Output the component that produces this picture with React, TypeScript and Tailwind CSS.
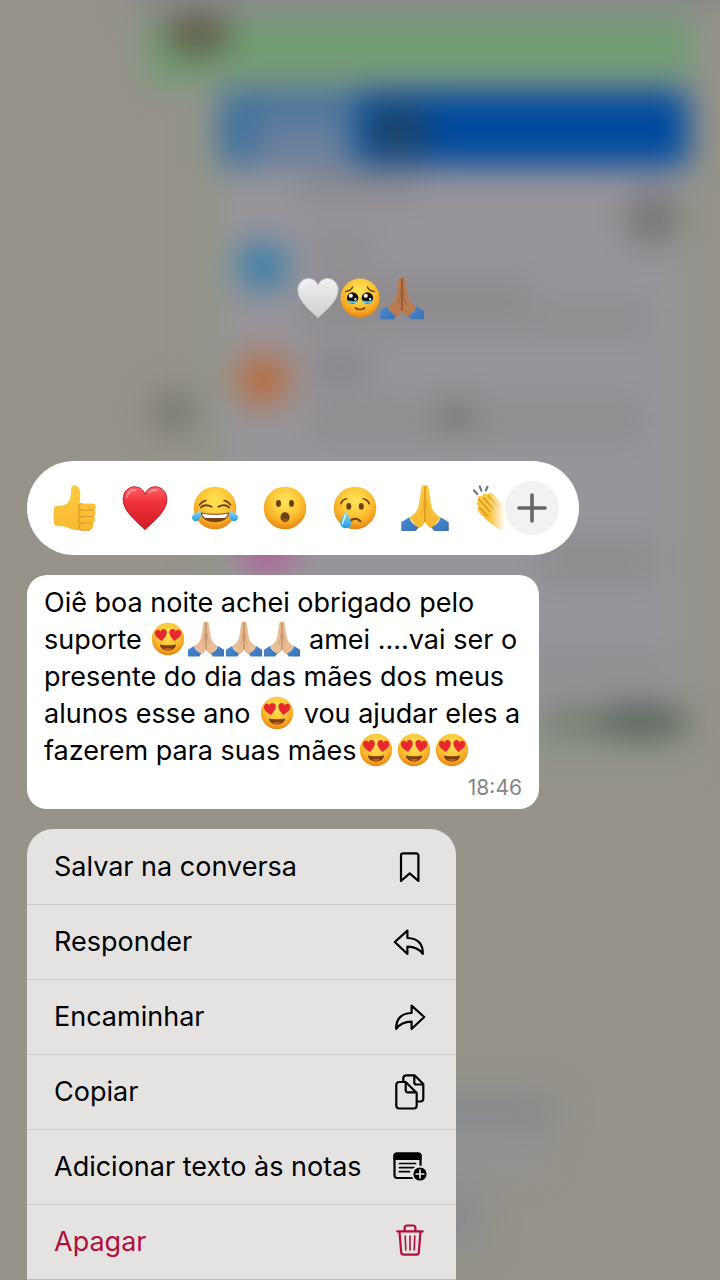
import React from 'react';

interface GlyphProps {
  className?: string;
}

const HEART_PATH =
  'M20 37.3C16 33 2.5 23.4 2.5 13.2C2.5 7 6.8 3 11.6 3C15.5 3 18.6 5.2 20 9C21.4 5.2 24.5 3 28.4 3C33.2 3 37.5 7 37.5 13.2C37.5 23.4 24 33 20 37.3Z';

// Gradients shared by every emoji
const EmojiDefs = () => (
  <svg className="absolute h-0 w-0" aria-hidden="true">
    <defs>
      <radialGradient id="face" cx="0.5" cy="0.34" r="0.68">
        <stop offset="0" stopColor="#ffe45a" />
        <stop offset="0.45" stopColor="#fdcb3a" />
        <stop offset="0.75" stopColor="#f8a925" />
        <stop offset="1" stopColor="#e07f10" />
      </radialGradient>
      <linearGradient id="red-heart" x1="0" y1="0" x2="0" y2="1">
        <stop offset="0" stopColor="#ff6468" />
        <stop offset="0.35" stopColor="#f0343c" />
        <stop offset="1" stopColor="#cf1a25" />
      </linearGradient>
      <linearGradient id="white-heart" x1="0" y1="0" x2="0" y2="1">
        <stop offset="0" stopColor="#efefef" />
        <stop offset="0.5" stopColor="#e0e0e1" />
        <stop offset="1" stopColor="#cfcfd1" />
      </linearGradient>
      <linearGradient id="tear" x1="0" y1="0" x2="0" y2="1">
        <stop offset="0" stopColor="#9fe0fa" />
        <stop offset="1" stopColor="#1e9ee0" />
      </linearGradient>
      <linearGradient id="hand" x1="0" y1="0" x2="0" y2="1">
        <stop offset="0" stopColor="#fdcb3f" />
        <stop offset="1" stopColor="#f8b932" />
      </linearGradient>
      <linearGradient id="sleeve" x1="0" y1="0" x2="1" y2="1">
        <stop offset="0" stopColor="#4a8bd0" />
        <stop offset="1" stopColor="#3a70b4" />
      </linearGradient>
    </defs>
  </svg>
);

const Emoji: React.FC<{ label: string; className?: string; children: React.ReactNode }> = ({
  label,
  className,
  children,
}) => (
  <svg viewBox="0 0 40 40" role="img" aria-label={label} className={className} fill="none">
    {children}
  </svg>
);

const FaceBase = () => <circle cx="20" cy="20" r="17" fill="url(#face)" />;

const HeartEyes: React.FC<GlyphProps> = ({ className }) => (
  <Emoji label="😍" className={className}>
    <FaceBase />
    <g fill="#e8282f">
      <path transform="translate(5.6 8.8) rotate(-8 7 7) scale(.36)" d={HEART_PATH} />
      <path transform="translate(20.2 8.8) rotate(8 7 7) scale(.36)" d={HEART_PATH} />
    </g>
    <path d="M11.5 25.4C14 27 26 27 28.5 25.4C28.6 29.2 25 32 20 32S11.4 29.2 11.5 25.4Z" fill="#7c3f12" />
    <path d="M15.5 30.5C17.5 29 22.5 29 24.5 30.5C22 32 18 32 15.5 30.5Z" fill="#c9601f" />
  </Emoji>
);

const Joy: React.FC<GlyphProps> = ({ className }) => (
  <Emoji label="😂" className={className}>
    <FaceBase />
    <g stroke="#6b3d0e" strokeLinecap="round">
      <path d="M8.8 19.6C10.5 17.4 14 17 17.2 19" strokeWidth="1.6" />
      <path d="M22.8 19C26 17 29.5 17.4 31.2 19.6" strokeWidth="1.6" />
      <path d="M7.6 17.6C9 15.4 10.6 14.4 12.8 14M32.4 17.6C31 15.4 29.4 14.4 27.2 14" strokeWidth="1.2" />
    </g>
    <path d="M8.5 23.4C15 25 25 25 31.5 23.4C31 28.6 26 31.4 20 31.4S9 28.6 8.5 23.4Z" fill="#7a4215" />
    <path d="M9.6 24.4C15 25.8 25 25.8 30.4 24.4C29.9 26.4 28.8 27.6 27.5 27.9H12.5C11.2 27.6 10.1 26.4 9.6 24.4Z" fill="#fff" />
    <path d="M8.3 21.5C9.5 26.5 7.8 30.5 4.6 30.5C2 30.5 .8 28 2.2 25.8C3.5 23.8 6.3 23.5 8.3 21.5Z" fill="url(#tear)" />
    <path d="M31.7 21.5C30.5 26.5 32.2 30.5 35.4 30.5C38 30.5 39.2 28 37.8 25.8C36.5 23.8 33.7 23.5 31.7 21.5Z" fill="url(#tear)" />
  </Emoji>
);

const Wow: React.FC<GlyphProps> = ({ className }) => (
  <Emoji label="😮" className={className}>
    <FaceBase />
    <g fill="#6b4111">
      <ellipse cx="14.8" cy="16.3" rx="2" ry="2.7" />
      <ellipse cx="25.2" cy="16.3" rx="2" ry="2.7" />
      <ellipse cx="20" cy="27.4" rx="3.6" ry="4" />
    </g>
    <ellipse cx="20" cy="29.6" rx="2.3" ry="1.3" fill="#8f5a22" />
  </Emoji>
);

const Cry: React.FC<GlyphProps> = ({ className }) => (
  <Emoji label="😢" className={className}>
    <FaceBase />
    <g fill="#6b4111">
      <ellipse cx="15" cy="18.6" rx="2" ry="2.7" />
      <ellipse cx="25" cy="18.6" rx="2" ry="2.7" />
    </g>
    <g stroke="#6b4111" strokeLinecap="round">
      <path d="M8.7 16.5C9.5 14.2 11 13 13.3 12.6M31.3 16.5C30.5 14.2 29 13 26.7 12.6" strokeWidth="1.3" />
      <path d="M16.5 30.2C18.5 28 22 28 24.2 30.6" strokeWidth="1.6" />
    </g>
    <path d="M12.5 21.5C13.5 26 17 28.5 17 31.8A4.4 4.4 0 0 1 8.2 31.8C8.2 28.5 11.5 26 12.5 21.5Z" fill="url(#tear)" />
    <path d="M12.3 25.5C12 28.5 10 30 10.2 32.5" stroke="#d6f3fd" strokeWidth="1.2" strokeLinecap="round" />
  </Emoji>
);

const Pleading: React.FC<GlyphProps> = ({ className }) => (
  <Emoji label="🥹" className={className}>
    <FaceBase />
    <path d="M7.5 14.5C10 14 12.5 12.6 13.6 10.5M32.5 14.5C30 14 27.5 12.6 26.4 10.5" stroke="#6b4111" strokeWidth="1.2" strokeLinecap="round" />
    <circle cx="13.6" cy="20" r="5" fill="#14100e" />
    <circle cx="26.4" cy="20" r="5" fill="#14100e" />
    <path d="M8.9 21.5C11 23.2 16 23.2 18.3 21.5C17.8 26 9.4 26 8.9 21.5ZM21.7 21.5C24 23.2 29 23.2 31.1 21.5C30.6 26 22.2 26 21.7 21.5Z" fill="#53c4dc" />
    <g fill="#fff">
      <circle cx="12" cy="18" r="1.8" />
      <circle cx="25" cy="18" r="1.8" />
      <circle cx="16" cy="21" r="1" />
      <circle cx="28.8" cy="21" r="1" />
    </g>
    <path d="M16 28.5C18 30.5 22 30.5 24 28.5" stroke="#7c4512" strokeWidth="1.5" strokeLinecap="round" />
  </Emoji>
);

interface PrayProps extends GlyphProps {
  skin?: string;
  shade?: string;
}

const Pray: React.FC<PrayProps> = ({ className, skin = 'url(#hand)', shade = '#d18d1c' }) => (
  <Emoji label="🙏" className={className}>
    <path
      d="M17.2 3.4C17.3 1.6 19.3 1.2 20 2.2C20.7 1.2 22.7 1.6 22.8 3.4L24.6 15C25.2 21.5 27.5 24.5 32.5 27.5L26 36.5C23.5 36 21.4 33.6 20 31.2C18.6 33.6 16.5 36 14 36.5L7.5 27.5C12.5 24.5 14.8 21.5 15.4 15Z"
      fill={skin}
    />
    <path d="M20 2.6V31" stroke={shade} strokeWidth="1" />
    <path d="M18.6 14C18.6 20 17.8 23.5 16 26M21.4 14C21.4 20 22.2 23.5 24 26" stroke={shade} strokeOpacity=".45" strokeWidth=".8" />
    <path d="M1 31.4L7.4 27.4C8.5 31 11.2 34 14.8 35.4L12.8 38.4H1Z" fill="url(#sleeve)" />
    <path d="M39 31.4L32.6 27.4C31.5 31 28.8 34 25.2 35.4L27.2 38.4H39Z" fill="url(#sleeve)" />
  </Emoji>
);

const Heart: React.FC<GlyphProps & { label: string; fill: string; edge: string }> = ({
  className,
  label,
  fill,
  edge,
}) => (
  <Emoji label={label} className={className}>
    <path d={HEART_PATH} fill={fill} stroke={edge} strokeWidth=".7" />
    <path d="M5.5 11C6.5 7.5 9 5.5 12 5.5M23.5 7.5C25 6 27 5.5 29 5.5" stroke="#fff" strokeOpacity=".4" strokeWidth="1.4" strokeLinecap="round" />
  </Emoji>
);

const ThumbsUp: React.FC<GlyphProps> = ({ className }) => (
  <Emoji label="👍" className={className}>
    <path
      d="M3.5 19C7 18 11 18.5 13.6 16.4C16.6 13.6 16.6 10 16.8 6.5C16.6 2.8 18.5 1.2 20.8 1.9C24.6 3.2 25 9 23.4 16.4H34C37.2 16.4 37.6 20.6 35.2 21.6C37.4 22.6 37.2 26 34.8 26.8C36.8 28 36.4 31.4 34 32C35.2 34.2 34.2 37.8 31.5 37.8H22C17 37.8 14 35 10 34.6C7 34.3 5 35 3.5 33.6C2.6 29 2.6 24 3.5 19Z"
      fill="url(#hand)"
    />
    <path
      d="M35.2 21.6H25C22 21.6 22 16.8 25 16.5M34.8 26.8H25C22.2 26.8 22.2 22 25 21.8M34 32H25C22.2 32 22.2 27.2 25 27M31.5 37.8H26C22.8 37.8 22.8 32.6 25.2 32.2"
      stroke="#dc9a24"
      strokeWidth=".9"
      strokeLinecap="round"
    />
  </Emoji>
);

const Clap: React.FC<GlyphProps> = ({ className }) => (
  <Emoji label="👏" className={className}>
    <path d="M3.2 6L5.8 8.8M7.8 2.6L9 6.2M14 3L12.6 6" stroke="#6d7680" strokeWidth="1.7" strokeLinecap="round" />
    <path
      d="M6 12C6.5 10 8.5 10 10 11C9.5 8.5 12 7.6 14 9.3C15 7.2 17.5 7.5 19 9.5L26 17C26.5 14 29 13.5 30 16L31 27C31.5 33 28.5 36.5 25.5 37.5C21 36 12 29 7.5 23.5C5.5 21.5 5.5 19.5 7 19C4.8 17 5 14.8 6.6 14.6Z"
      fill="url(#hand)"
    />
    <path d="M7 13L16 23M10.5 11.5L19 21M14.5 10L22.5 19M7.5 19.5L13.5 26" stroke="#d18d1c" strokeWidth=".9" strokeLinecap="round" />
  </Emoji>
);

const MenuIcon: React.FC<{ children: React.ReactNode }> = ({ children }) => (
  <svg
    viewBox="0 0 36 36"
    className="h-9 w-9 shrink-0"
    fill="none"
    stroke="currentColor"
    strokeWidth="2.2"
    strokeLinecap="round"
    strokeLinejoin="round"
    aria-hidden="true"
  >
    {children}
  </svg>
);

const arrow = 'M2.8 18L15.4 6.6V14C25.5 14.3 31 19.5 30.8 30C27 24.3 22.5 22.6 15.4 22.6V30Z';

const menuItems = [
  {
    label: 'Salvar na conversa',
    icon: <path d="M11.2 4.3H24.2A2.2 2.2 0 0 1 26.4 6.5V32L17.7 24.4L9 32V6.5A2.2 2.2 0 0 1 11.2 4.3Z" />,
  },
  { label: 'Responder', icon: <path d={arrow} /> },
  {
    label: 'Encaminhar',
    icon: (
      <g transform="matrix(-1 0 0 1 35 0)">
        <path d={arrow} />
      </g>
    ),
  },
  {
    label: 'Copiar',
    icon: (
      <>
        <path d="M13.7 8H7.3A3 3 0 0 0 4.3 11V31.5A3 3 0 0 0 7.3 34.5H21.7A3 3 0 0 0 24.7 31.5V19L13.7 8V16A2.2 2.2 0 0 0 15.9 18.4H24.5" />
        <path d="M11.3 7.5V4.3A3 3 0 0 1 14.3 1.3H22.5L31.3 10V24.5A3 3 0 0 1 28.3 27.5H25.5M22.3 1.5V8.5A2 2 0 0 0 24.3 10.5H31" />
      </>
    ),
  },
  {
    label: 'Adicionar texto às notas',
    icon: (
      <>
        <rect x="2.5" y="4.5" width="26" height="24.5" rx="2.5" />
        <path d="M2.5 10V6.5A2 2 0 0 1 4.5 4.5H26.5A2 2 0 0 1 28.5 6.5V10Z" fill="currentColor" />
        <path d="M7.5 14.5H23.5M7.5 18.6H22M7.5 22.7H17.5" strokeWidth="1.7" />
        <circle cx="28" cy="25" r="7.6" fill="currentColor" stroke="#e4e3e2" strokeWidth="2" />
        <path d="M28 21.2V28.8M24.2 25H31.8" stroke="#e4e3e2" strokeWidth="1.7" />
      </>
    ),
  },
  {
    label: 'Apagar',
    danger: true,
    icon: (
      <>
        <path d="M5.3 7.4H30.7M12.6 7.2V4A2.5 2.5 0 0 1 15.1 1.5H20.9A2.5 2.5 0 0 1 23.4 4V7.2M7.5 7.6L9.2 28.4A2.5 2.5 0 0 0 11.7 30.7H24.3A2.5 2.5 0 0 0 26.8 28.4L28.5 7.6" />
        <path d="M13.2 12L13.8 26M18 12V26M22.8 12L22.2 26" strokeWidth="1.6" />
      </>
    ),
  },
];

const reactions = [
  { name: 'Curtir', icon: <ThumbsUp className="h-full w-full" /> },
  {
    name: 'Amei',
    icon: <Heart label="❤️" fill="url(#red-heart)" edge="#b5101c" className="h-full w-full" />,
  },
  { name: 'Rindo', icon: <Joy className="h-full w-full" /> },
  { name: 'Surpreso', icon: <Wow className="h-full w-full" /> },
  { name: 'Triste', icon: <Cry className="h-full w-full" /> },
  { name: 'Obrigado', icon: <Pray className="h-full w-full" /> },
  { name: 'Palmas', icon: <Clap className="h-full w-full" /> },
];

// Out-of-focus conversation behind the overlay
const Backdrop = () => (
  <svg
    className="absolute inset-0 h-full w-full"
    viewBox="0 0 720 1280"
    preserveAspectRatio="xMidYMin slice"
    aria-hidden="true"
  >
    <defs>
      <filter
        id="soft"
        filterUnits="userSpaceOnUse"
        x="-80"
        y="-80"
        width="880"
        height="1440"
        colorInterpolationFilters="sRGB"
      >
        <feGaussianBlur stdDeviation="16" />
      </filter>
    </defs>
    <rect width="720" height="1280" fill="#96938b" />
    <g filter="url(#soft)">
      <rect x="130" y="-60" width="640" height="70" fill="#88888b" />
      <rect x="148" y="18" width="544" height="66" fill="#6f9c73" />
      <rect x="205" y="75" width="487" height="685" fill="#90978b" />
      <rect x="224" y="160" width="458" height="565" fill="#98959a" />
      <rect x="220" y="90" width="468" height="76" fill="#004a9e" />
      <rect x="220" y="90" width="138" height="76" fill="#3d709c" />
      <rect x="255" y="114" width="95" height="54" fill="#687f9c" />
      <rect x="368" y="108" width="60" height="46" fill="#1e4568" />
      <ellipse cx="198" cy="34" rx="34" ry="22" fill="#625e4a" />
      <rect x="300" y="176" width="120" height="18" fill="#868388" />
      <circle cx="652" cy="218" r="28" fill="#777677" />
      <circle cx="263" cy="266" r="25" fill="#377ea9" />
      <circle cx="263" cy="379" r="26" fill="#b86c3c" />
      <rect x="310" y="240" width="60" height="18" fill="#8b888c" />
      <rect x="310" y="280" width="220" height="24" fill="#8c898d" />
      <rect x="300" y="306" width="350" height="26" fill="#8f8c90" />
      <rect x="310" y="355" width="60" height="24" fill="#848186" />
      <rect x="310" y="400" width="330" height="40" fill="#8f8d90" />
      <circle cx="456" cy="415" r="18" fill="#767775" />
      <circle cx="174" cy="412" r="24" fill="#7b7b75" />
      <circle cx="268" cy="545" r="28" fill="#b0609a" />
      <rect x="540" y="540" width="115" height="40" fill="#8e8b8f" />
      <rect x="520" y="655" width="150" height="30" fill="#918e92" />
      <rect x="540" y="704" width="150" height="34" fill="#788176" />
      <ellipse cx="640" cy="721" rx="44" ry="18" fill="#5b645c" />
      <rect x="400" y="1092" width="155" height="38" fill="#88898b" />
      <rect x="400" y="1130" width="140" height="40" fill="#939394" />
      <rect x="400" y="1185" width="85" height="60" fill="#8b8c8e" />
    </g>
  </svg>
);

const inlineEmoji = '-mt-4 inline-block h-[38px] w-[38px] align-[-9px]';

const LightPray = () => <Pray skin="#e8bd94" shade="#a8764d" className={inlineEmoji} />;

export default function App() {
  return (
    <div className="relative min-h-screen overflow-hidden font-[Inter,'Liberation_Sans',sans-serif] text-black">
      <EmojiDefs />
      <Backdrop />

      <main className="relative flex flex-col items-start gap-5 px-[27px] pt-[275px]">
        <div className="mb-[120px] flex -space-x-1 self-center">
          <Heart label="🤍" fill="url(#white-heart)" edge="#c4c4c6" className="h-[46px] w-[46px]" />
          <Pleading className="h-[46px] w-[46px]" />
          <Pray skin="#b97c50" shade="#7a4827" className="h-[46px] w-[46px]" />
        </div>

        <div className="flex h-[94px] w-full max-w-[552px] items-center rounded-full bg-white pr-5 pl-[23px]">
          <div className="relative flex min-w-0 flex-1 gap-5 overflow-hidden">
            {reactions.map(({ name, icon }) => (
              <button key={name} type="button" aria-label={name} className="h-[50px] w-[50px] shrink-0">
                {icon}
              </button>
            ))}
            <div className="pointer-events-none absolute inset-y-0 right-0 w-4 bg-linear-to-r from-white/0 to-white" />
          </div>
          <button
            type="button"
            aria-label="Mais reações"
            className="flex h-[54px] w-[54px] shrink-0 items-center justify-center rounded-full bg-[#f2f2f2] text-[#666666]"
          >
            <svg viewBox="0 0 30 30" className="h-[30px] w-[30px]" stroke="currentColor" strokeWidth="3.6" strokeLinecap="round" aria-hidden="true">
              <path d="M15 2V28M2 15H28" />
            </svg>
          </button>
        </div>

        <article className="w-full max-w-[512px] rounded-[20px] bg-white px-[17px] pt-[9px] pb-[7px]">
          <p className="text-[27px] leading-[37px]">
            Oiê boa noite achei obrigado pelo suporte <HeartEyes className={inlineEmoji} />
            <LightPray />
            <LightPray />
            <LightPray /> amei ....vai ser o presente do dia das mães dos meus alunos esse ano{' '}
            <HeartEyes className={inlineEmoji} /> vou ajudar eles a fazerem para suas mães
            <HeartEyes className={inlineEmoji} />
            <HeartEyes className={inlineEmoji} />
            <HeartEyes className={inlineEmoji} />
          </p>
          <time className="mt-[5px] block text-right text-[21px] leading-7 text-[#858585]">18:46</time>
        </article>

        <div className="w-full max-w-[429px] overflow-hidden rounded-t-[26px] border-b-2 border-[#bdbcbb] bg-[#e4e3e2]">
          {menuItems.map(({ label, icon, danger }) => (
            <button
              key={label}
              type="button"
              className={`flex h-[75px] w-full items-center justify-between border-t border-[#cbcac9] pr-7 pl-[27px] text-left text-[27px] leading-9 first:border-transparent ${
                danger ? 'text-[#b20f3d]' : 'text-black'
              }`}
            >
              {label}
              <MenuIcon>{icon}</MenuIcon>
            </button>
          ))}
        </div>
      </main>
    </div>
  );
}
